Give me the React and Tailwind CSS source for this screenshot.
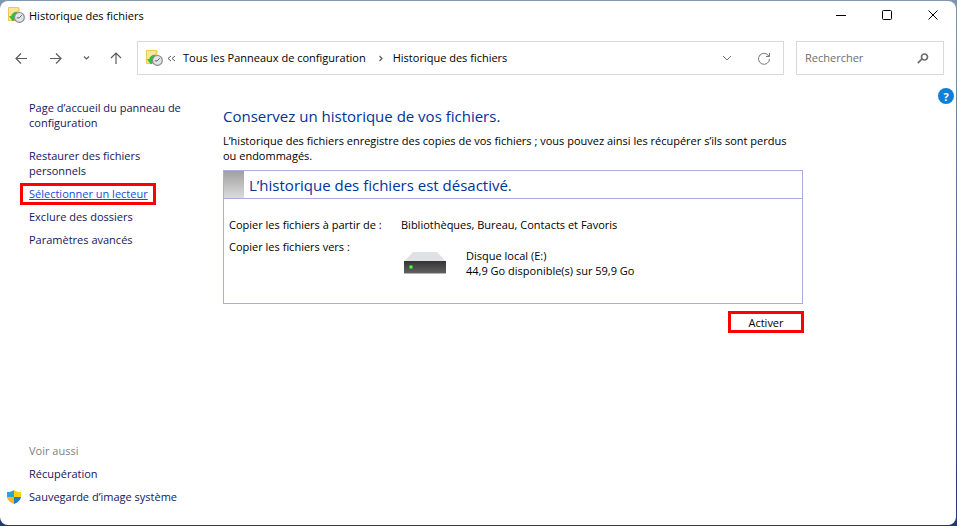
function HistoryIcon() {
  return (
    <svg width="17" height="16" viewBox="0 0 17 16" className="shrink-0" aria-hidden="true">
      <path d="M.5.5h10.5v13H.5z" fill="#fde694" stroke="#eec75a" />
      <path d="M9.5 0H11v6H9.5z" fill="#f3d16a" />
      <path d="M1.500 9.500H3.500C3.800 6.800 5.800 5 9.500 5C7.500 6.500 6.800 8 6.800 9.500H8.500L5 14z" fill="#2dc52d" stroke="#1f9f2c" strokeWidth=".5" />
      <circle cx="11.400" cy="10.400" r="4.900" fill="#e2e5e8" stroke="#858b90" strokeWidth="1.200" />
      <path d="M11.200 10.900 13.800 8.200M11.200 10.900H8.800" stroke="#5f656b" fill="none" />
    </svg>
  );
}

function DriveIcon() {
  return (
    <svg width="42" height="23" viewBox="0 0 42 23" className="shrink-0" aria-hidden="true">
      <defs>
        <linearGradient id="driveFront" x1="0" y1="0" x2="0" y2="1">
          <stop offset="0" stopColor="#333333" />
          <stop offset="1" stopColor="#606060" />
        </linearGradient>
      </defs>
      <path d="M9 0h24l9 9.500H0z" fill="#e0e1e4" />
      <path d="M0 9h42v12H0z" fill="url(#driveFront)" />
      <path d="M0 21h42v1H0z" fill="#b5b5b5" />
      <circle cx="7" cy="15" r="2" fill="#2fd52a" />
      <circle cx="7" cy="15" r=".8" fill="#a6ff8c" />
    </svg>
  );
}

function ShieldIcon() {
  return (
    <svg width="14" height="14" viewBox="0 0 14 14" className="shrink-0" aria-hidden="true">
      <path d="M7 0v7H0V2c3 0 5-.6 7-2z" fill="#2f9fe4" />
      <path d="M7 0v7h7V2c-3 0-5-.6-7-2z" fill="#fed20c" />
      <path d="M0 7h7v7C3 12.500.300 10 0 7z" fill="#fdb913" />
      <path d="M14 7H7v7c4-1.500 6.700-4 7-7z" fill="#1b7fd0" />
    </svg>
  );
}

function LineIcon({ d, w = 12, h = 12, stroke = 1 }) {
  return (
    <svg
      width={w}
      height={h}
      viewBox={`0 0 ${w} ${h}`}
      fill="none"
      stroke="currentColor"
      strokeWidth={stroke}
      className="shrink-0"
      aria-hidden="true"
    >
      <path d={d} />
    </svg>
  );
}

function TitleBar() {
  return (
    <header className="flex h-7 items-center pl-2 pr-[18px]">
      <HistoryIcon />
      <h1 className="ml-1 flex-1">Historique des fichiers</h1>
      <div className="flex items-center gap-9">
        <button type="button" aria-label="Réduire">
          <LineIcon d="M0 5.500h10" w={10} h={10} />
        </button>
        <button type="button" aria-label="Agrandir">
          <LineIcon d="M1.500.5h7q1 0 1 1v7q0 1-1 1h-7q-1 0-1-1v-7q0-1 1-1z" w={10} h={10} />
        </button>
        <button type="button" aria-label="Fermer">
          <LineIcon d="M.5.5l9 9M9.500.5l-9 9" w={10} h={10} />
        </button>
      </div>
    </header>
  );
}

function NavBar() {
  return (
    <nav className="mt-3 flex h-[34px] items-stretch pl-[15px] pr-3">
      <div className="flex w-[122px] shrink-0 items-center text-[#5c5c5c]">
        <button type="button" aria-label="Précédent">
          <LineIcon d="M12 6.500H1M6 1.500l-5 5 5 5" w={12} h={13} stroke={1.2} />
        </button>
        <button type="button" aria-label="Suivant" className="ml-[23px]">
          <LineIcon d="M0 6.500h11M6 1.500l5 5-5 5" w={12} h={13} stroke={1.2} />
        </button>
        <button type="button" aria-label="Emplacements récents" className="ml-[21px]">
          <LineIcon d="M1 1.500l2.500 2.500L6 1.500" w={7} h={6} stroke={1.2} />
        </button>
        <button type="button" aria-label="Remonter" className="ml-5">
          <LineIcon d="M6 12V1M1 6l5-5 5 5" w={12} h={13} stroke={1.2} />
        </button>
      </div>

      <div className="flex min-w-0 flex-1 items-center border border-[#d9d9d9] pl-2 pr-3">
        <HistoryIcon />
        <button type="button" aria-label="Afficher le chemin" className="ml-1 text-[#5c5c5c]">
          <LineIcon d="M4 1L1 3.500 4 6M8 1L5 3.500 8 6" w={9} h={7} />
        </button>
        <a href="#" className="ml-[7px] pb-0.5 whitespace-nowrap">
          Tous les Panneaux de configuration
        </a>
        <span className="ml-3 text-[#5c5c5c]">
          <LineIcon d="M1.500 1l2.500 2.500L1.500 6" w={6} h={7} stroke={1.2} />
        </span>
        <a href="#" className="ml-[9px] flex-1 pb-0.5 whitespace-nowrap">
          Historique des fichiers
        </a>
        <button type="button" aria-label="Emplacements précédents" className="text-[#777]">
          <LineIcon d="M1 1l4 4 4-4" w={10} h={6} />
        </button>
        <button type="button" aria-label="Actualiser" className="ml-[25px] text-[#777]">
          <LineIcon d="M12 4.500A5.500 5.500 0 1 0 12.500 7M12.500 1v3.500H9" w={14} h={13} />
        </button>
      </div>

      <div className="ml-3 flex w-[148px] shrink-0 items-center border border-[#d9d9d9] pl-2 pr-3">
        <input
          type="search"
          aria-label="Rechercher"
          placeholder="Rechercher"
          className="min-w-0 flex-1 bg-transparent pb-0.5 outline-none placeholder:text-[#6d6d6d]"
        />
        <button type="button" aria-label="Lancer la recherche" className="text-[#6d6d6d]">
          <LineIcon d="M4.800 6.200L.8 10.200M7.500 1a3 3 0 1 0 0 6 3 3 0 0 0 0-6z" w={14} h={11} stroke={1.7} />
        </button>
      </div>
    </nav>
  );
}

function Sidebar() {
  return (
    <aside className="flex w-[223px] shrink-0 flex-col justify-between pl-[29px] text-[#15155c]">
      <div>
        <a href="#" className="block w-44">
          Page d’accueil du panneau de configuration
        </a>
        <ul className="mt-[18px] flex flex-col items-start gap-2">
          <li>
            <a href="#" className="block w-32">
              Restaurer des fichiers personnels
            </a>
          </li>
          <li className="-mt-[3px] -mb-1 -ml-[9px]">
            <a
              href="#"
              className="block w-34 border-3 border-[#ff0000] pb-px pl-1.5 whitespace-nowrap text-[#0f4fd8] underline"
            >
              Sélectionner un lecteur
            </a>
          </li>
          <li>
            <a href="#">Exclure des dossiers</a>
          </li>
          <li>
            <a href="#">Paramètres avancés</a>
          </li>
        </ul>
      </div>

      <div className="mb-[21px] flex flex-col gap-2">
        <h2 className="text-[#7f7f7f]">Voir aussi</h2>
        <a href="#">Récupération</a>
        <a href="#" className="-ml-[22px] flex items-center gap-2">
          <ShieldIcon />
          Sauvegarde d’image système
        </a>
      </div>
    </aside>
  );
}

function Content() {
  return (
    <main className="max-w-[580px] min-w-0 flex-1 pt-[7px]">
      <h2 className="text-[15px] leading-[18px] text-[#003399]">Conservez un historique de vos fichiers.</h2>
      <p className="mt-2 pr-1">
        L’historique des fichiers enregistre des copies de vos fichiers ; vous pouvez ainsi les récupérer s’ils sont
        perdus ou endommagés.
      </p>

      <section className="mt-[7px] border border-[#acacdc]">
        <div className="flex h-7 items-center border-b border-[#acacdc]">
          <div className="w-5 self-stretch bg-linear-to-b from-[#a0a0a0] to-[#dcdcdc]" />
          <h3 className="ml-[5px] text-[15px] leading-[18px] text-[#003399]">
            L’historique des fichiers est désactivé.
          </h3>
        </div>
        <dl className="grid grid-cols-[172px_1fr] gap-y-[7px] pt-[18px] pb-[25px] pl-[5px]">
          <dt>Copier les fichiers à partir de :</dt>
          <dd>Bibliothèques, Bureau, Contacts et Favoris</dd>
          <dt>Copier les fichiers vers :</dt>
          <dd className="mt-[9px] flex items-center gap-5 pl-[3px]">
            <DriveIcon />
            <div>
              <p>Disque local (E:)</p>
              <p>44,9 Go disponible(s) sur 59,9 Go</p>
            </div>
          </dd>
        </dl>
      </section>

      <div className="-mr-px mt-[7px] flex justify-end">
        <button type="button" className="h-[22px] w-[76px] border-3 border-[#ff0000]">
          Activer
        </button>
      </div>
    </main>
  );
}

export default function App() {
  return (
    <div className="flex min-h-screen flex-col bg-linear-to-b from-[#8098ae] to-[#1f3a70] pt-px pr-px pb-px font-['Open_Sans','Noto_Sans',sans-serif] text-[11px] leading-[15px] text-black">
      <div className="flex flex-1 flex-col rounded-lg bg-white">
        <TitleBar />
        <NavBar />
        <div className="flex flex-1 pt-[25px] pr-0.5">
          <Sidebar />
          <Content />
          <button
            type="button"
            aria-label="Aide"
            className="-mt-3 ml-auto size-4 shrink-0 rounded-full bg-[#0f80d8] text-center font-bold text-white"
          >
            ?
          </button>
        </div>
      </div>
    </div>
  );
}
